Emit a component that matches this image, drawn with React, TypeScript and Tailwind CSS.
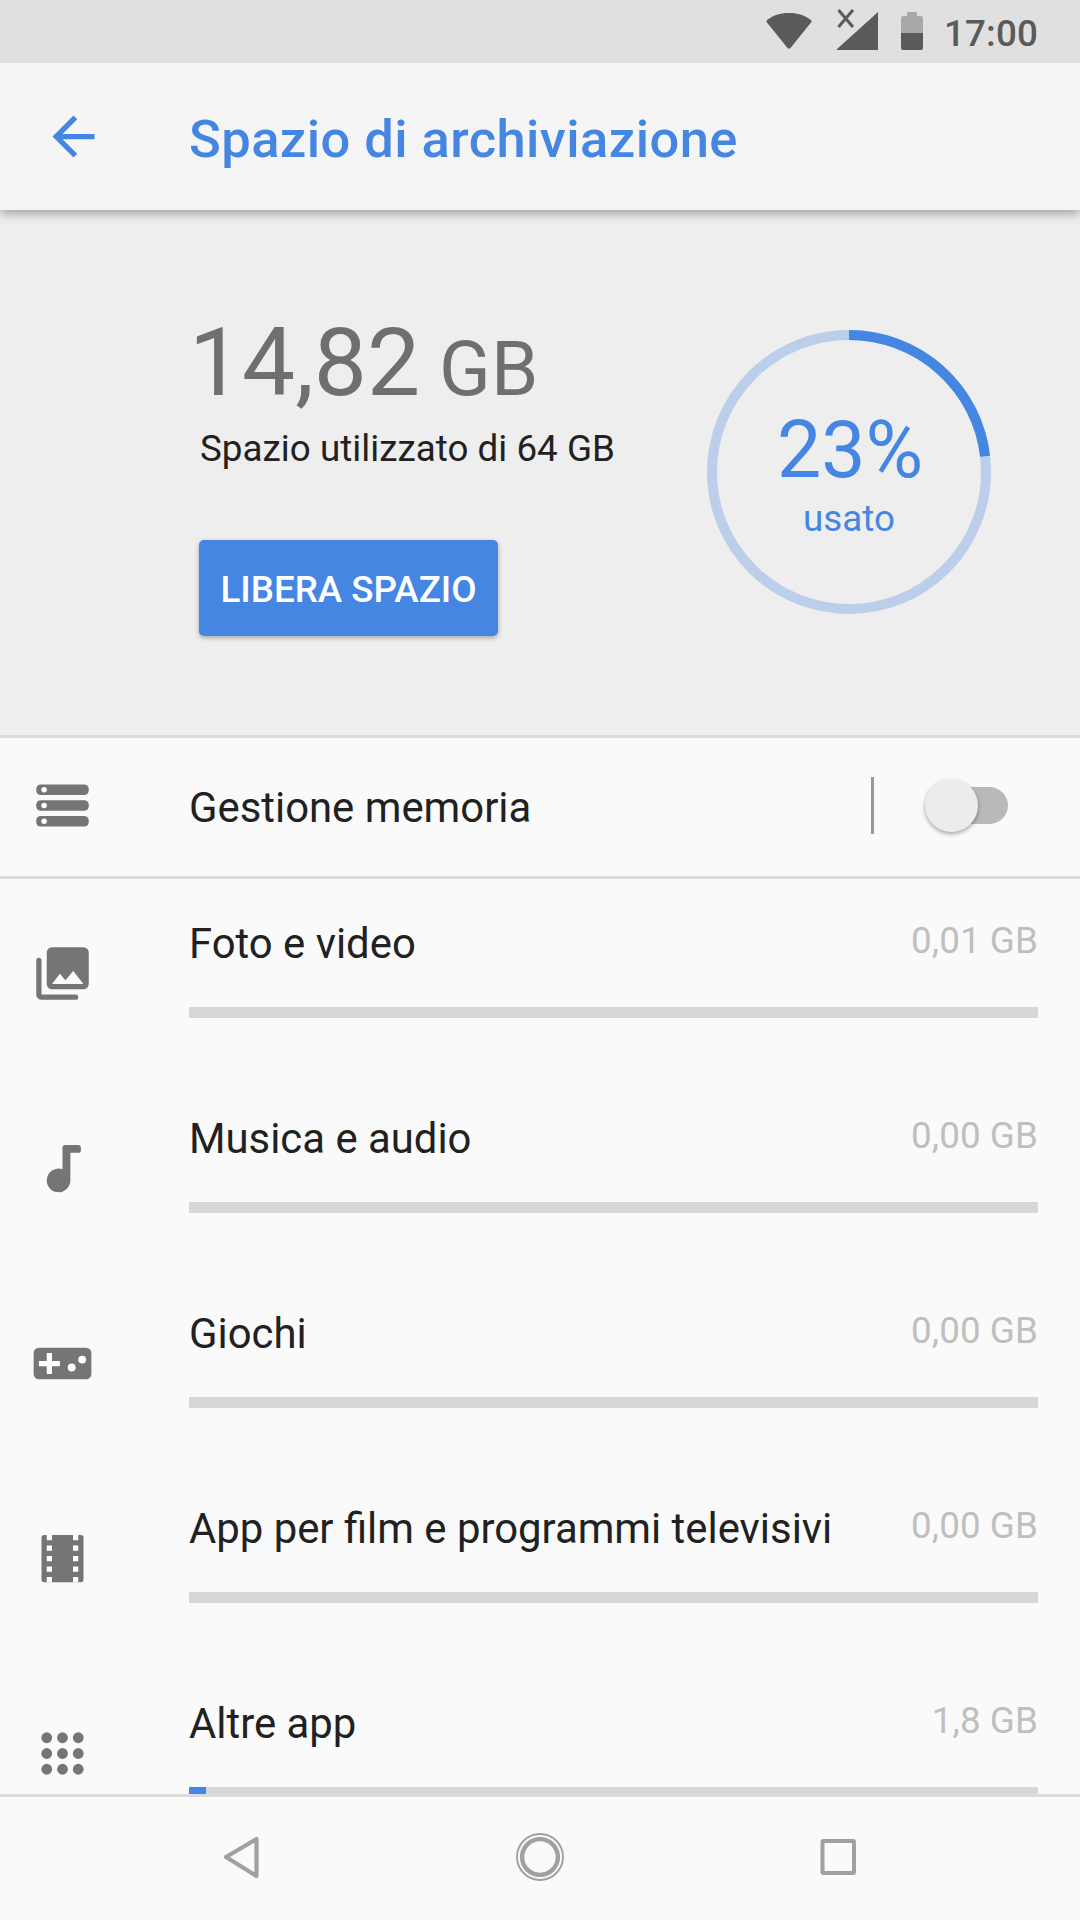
import type { ReactNode } from "react";

function StatusBar() {
  return (
    <header className="relative z-20 flex h-[63px] shrink-0 items-start bg-[#e0e0e0] pl-[766px] text-[#5a5a5a]">
      <svg className="mt-[12px] h-[38px] w-[46px]" viewBox="0 0 46 38" fill="currentColor">
        <path d="M1 8C7 3.500 14 1 23 1s16 2.500 22 7q1 1 .2 2.200L24.500 36q-1.500 1.500-3 0L.8 10.200Q0 9 1 8Z" />
      </svg>
      <svg className="ml-[24px] mt-[9px] h-[41px] w-[42px]" viewBox="0 0 42 41">
        <path d="M42 3v38H0Z" fill="currentColor" />
        <path d="M2.500 1 17 18M17 1 2.500 18" fill="none" stroke="currentColor" strokeWidth="3" />
      </svg>
      <svg className="ml-[23px] mt-[12px] h-[38px] w-[22px]" viewBox="0 0 22 38">
        <path d="M6 0h10v4h4a2 2 0 0 1 2 2v15H0V6a2 2 0 0 1 2-2h4Z" fill="#a9a9a9" />
        <path d="M0 21h22v15a2 2 0 0 1-2 2H2a2 2 0 0 1-2-2Z" fill="currentColor" />
      </svg>
      <span className="ml-[21px] mt-[11px] text-[36.75px] leading-[45px] font-medium tracking-[0.15px]">17:00</span>
    </header>
  );
}

function AppBar() {
  return (
    <div className="relative z-10 flex h-[147px] shrink-0 items-center bg-[#f5f5f5] pl-[42px] text-[#4586e3] shadow-[0_3px_10px_rgba(0,0,0,0.36)]">
      <svg className="h-[63px] w-[63px]" viewBox="0 0 24 24" fill="currentColor">
        <path d="M20 11H7.830l5.590-5.590L12 4l-8 8 8 8 1.410-1.410L7.830 13H20v-2z" />
      </svg>
      <h1 className="ml-[84px] mt-[4px] text-[52.5px] leading-[62px] font-medium tracking-[0.42px]">
        Spazio di archiviazione
      </h1>
    </div>
  );
}

function UsageRing() {
  const length = 2 * Math.PI * 137;
  return (
    <div className="relative mt-[120px] h-[284px] w-[284px]">
      <svg className="h-full w-full" viewBox="0 0 284 284" fill="none" strokeWidth="10">
        <circle cx="142" cy="142" r="137" stroke="#bbceea" />
        <circle
          cx="142"
          cy="142"
          r="137"
          stroke="#4586e3"
          strokeDasharray={`${length * 0.2315} ${length}`}
          transform="rotate(-90 142 142)"
        />
      </svg>
      <div className="absolute inset-0 flex flex-col items-center pt-[72px] text-[#4586e3]">
        <span className="pl-[2px] text-[78.75px] leading-[97px]">23%</span>
        <span className="text-[36.75px] leading-[40px]">usato</span>
      </div>
    </div>
  );
}

function Summary() {
  return (
    <section className="flex h-[528px] shrink-0 border-b-[3px] border-[#dcdcdc] bg-[#eeeeee] pl-[189px]">
      <div className="w-[518px] pt-[95px]">
        <p className="h-[116px] text-[94.5px] leading-[116px] text-[#6f6f6f]">
          14,82<span className="text-[76px] tracking-[0.2px]"> GB</span>
        </p>
        <p className="ml-[11px] mt-[6px] text-[36.75px] leading-[44px] tracking-[0.03px] whitespace-nowrap text-[#212121]">
          Spazio utilizzato di 64 GB
        </p>
        <button className="ml-[10px] mt-[69px] flex h-[96px] w-[299px] items-center justify-center rounded-[5px] bg-[#4586e3] pt-[4px] text-[36.75px] leading-[44px] font-medium text-white shadow-[0_2px_5px_rgba(0,0,0,0.3)]">
          LIBERA SPAZIO
        </button>
      </div>
      <UsageRing />
    </section>
  );
}

function Icon({ children }: { children: ReactNode }) {
  return (
    <svg className="h-[63px] w-[63px] shrink-0" viewBox="0 0 24 24" fill="#757575">
      {children}
    </svg>
  );
}

function StorageManager() {
  return (
    <section className="flex h-[141px] shrink-0 items-start border-b-[3px] border-[#dcdcdc] pl-[31px]">
      <div className="mt-[36px]">
        <Icon>
          {[4, 10, 16].map((y) => (
            <g key={y}>
              <rect x="2" y={y} width="20" height="4" rx="1.700" />
              <circle cx="5" cy={y + 2} r="1.050" fill="#fff" />
            </g>
          ))}
        </Icon>
      </div>
      <span className="ml-[95px] mt-[45px] w-[682px] text-[41.85px] leading-[50px] text-[#212121]">
        Gestione memoria
      </span>
      <div className="mt-[39px] h-[57px] w-[3px] bg-[#999999]" />
      <div className="relative ml-[64px] mt-[49px] h-[37px] w-[70px] rounded-full bg-[#b9b9b9]">
        <div className="absolute -top-[8px] -left-[13px] h-[53px] w-[53px] rounded-full bg-[#ececec] shadow-[0_2px_4px_rgba(0,0,0,0.35)]" />
      </div>
    </section>
  );
}

const categories: { name: string; size: string; fill: number; icon: ReactNode }[] = [
  {
    name: "Foto e video",
    size: "0,01 GB",
    fill: 0,
    icon: (
      <>
        <path
          fillRule="evenodd"
          d="M8 2h12a2 2 0 0 1 2 2v12a2 2 0 0 1-2 2H8a2 2 0 0 1-2-2V4a2 2 0 0 1 2-2ZM8 16h12l-3.900-5-3 3.600-2.100-2.500Z"
        />
        <path d="M2 7a1 1 0 0 1 2 0v13h13a1 1 0 0 1 0 2H4a2 2 0 0 1-2-2Z" />
      </>
    ),
  },
  {
    name: "Musica e audio",
    size: "0,00 GB",
    fill: 0,
    icon: <path d="M13 3h5a1 1 0 0 1 1 1v1a1 1 0 0 1-1 1h-3v10.500A4.500 4.500 0 1 1 12 12.260V4a1 1 0 0 1 1-1Z" />,
  },
  {
    name: "Giochi",
    size: "0,00 GB",
    fill: 0,
    icon: (
      <>
        <rect x="1" y="6" width="22" height="12" rx="2" />
        <path d="M6 8h2v3h3v2H8v3H6v-3H3v-2h3Z" fill="#fff" />
        <circle cx="15.500" cy="13.500" r="1.500" fill="#fff" />
        <circle cx="19.500" cy="10.500" r="1.500" fill="#fff" />
      </>
    ),
  },
  {
    name: "App per film e programmi televisivi",
    size: "0,00 GB",
    fill: 0,
    icon: (
      <>
        <rect x="4" y="3" width="16" height="18" rx="1" />
        <path
          d="M6 3h2v2H6ZM6 7h2v2H6ZM6 11h2v2H6ZM6 15h2v2H6ZM6 19h2v2H6ZM16 3h2v2h-2ZM16 7h2v2h-2ZM16 11h2v2h-2ZM16 15h2v2h-2ZM16 19h2v2h-2Z"
          fill="#fff"
        />
      </>
    ),
  },
  {
    name: "Altre app",
    size: "1,8 GB",
    fill: 2,
    icon: (
      <>
        {[6, 12, 18].map((y) => [6, 12, 18].map((x) => <circle key={`${x}-${y}`} cx={x} cy={y} r="2.050" />))}
      </>
    ),
  },
];

function CategoryList() {
  return (
    <ul className="min-h-0 flex-1 overflow-hidden">
      {categories.map((c) => (
        <li key={c.name} className="flex h-[195px] pr-[42px] pl-[31px]">
          <div className="mt-[63px] w-[158px]">
            <Icon>{c.icon}</Icon>
          </div>
          <div className="flex-1 pt-[40px]">
            <div className="flex h-[50px] justify-between">
              <span className="text-[41.85px] leading-[50px] text-[#212121]">{c.name}</span>
              <span className="text-[36.75px] leading-[44px] tracking-[0.1px] text-[#bfbfbf]">{c.size}</span>
            </div>
            <div className="mt-[38px] h-[11px] bg-[#d7d7d7]">
              <div className="h-full bg-[#4586e3]" style={{ width: `${c.fill}%` }} />
            </div>
          </div>
        </li>
      ))}
    </ul>
  );
}

function NavBar() {
  return (
    <nav className="flex h-[126px] shrink-0 items-center justify-center gap-[242px] border-t-[3px] border-[#dcdcdc] bg-[#fafafa]">
      <svg className="h-[56px] w-[56px]" viewBox="0 0 56 56" fill="none" stroke="#a0a0a0" strokeWidth="4.200" strokeLinejoin="round">
        <path d="M12 26 42.500 8v37Z" />
      </svg>
      <svg className="h-[56px] w-[56px]" viewBox="0 0 56 56" fill="none" stroke="#a0a0a0">
        <circle cx="28" cy="26" r="23" strokeWidth="1.900" />
        <circle cx="28" cy="26" r="17.900" strokeWidth="4.400" />
      </svg>
      <svg className="h-[56px] w-[56px]" viewBox="0 0 56 56" fill="none" stroke="#a0a0a0" strokeWidth="4">
        <rect x="12.500" y="10" width="31.500" height="32" rx="1" />
      </svg>
    </nav>
  );
}

export default function App() {
  return (
    <main className="flex h-[1920px] w-[1080px] flex-col overflow-hidden bg-[#fafafa] font-[Roboto,sans-serif]">
      <StatusBar />
      <AppBar />
      <Summary />
      <StorageManager />
      <CategoryList />
      <NavBar />
    </main>
  );
}
